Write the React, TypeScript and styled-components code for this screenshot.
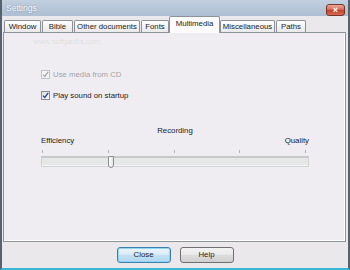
import { ReactElement } from 'react';
import styled, { createGlobalStyle, css } from 'styled-components';

//
// Styles
//

const GlobalStyle = createGlobalStyle`
  html, body {
    margin: 0;
    padding: 0;
    background: #ebe8ec;
  }
`;

const WindowFrame = styled.div`
  box-sizing: border-box;
  width: 350px;
  height: 270px;
  display: flex;
  flex-direction: column;
  background: #ebe8ec;
  border-left: 2px solid #56626e;
  border-right: 2px solid #56626e;
  border-bottom: 2px solid #38b6d6;
  font-family: "Liberation Sans", Arial, sans-serif;
  font-size: 7.8px;
  color: #1c1c1c;
`;

const TitleBar = styled.div`
  height: 16px;
  flex: none;
  display: flex;
  align-items: center;
  padding: 0 3px 0 4px;
  background: linear-gradient(#c2d0e0, #aebfd3);
`;

const Title = styled.span`
  font-size: 8.5px;
  color: #f7f9fc;
  text-shadow: 0 0 2px rgba(70, 90, 120, 0.6);
`;

const CloseBox = styled.div`
  margin-left: auto;
  box-sizing: border-box;
  width: 19px;
  height: 12px;
  margin-top: 4px;
  border: 1px solid #7a3426;
  border-radius: 3px;
  background: linear-gradient(#e8ab9c, #d3644e 50%, #c2402a 51%, #d66a4f);
  color: #fff;
  font-size: 9px;
  font-weight: 700;
  line-height: 10px;
  text-align: center;
`;

const TabStrip = styled.div`
  height: 16px;
  flex: none;
  display: flex;
  align-items: flex-end;
  padding-left: 2px;
`;

const Tab = styled.div<{ $width: number; $active?: boolean }>`
  box-sizing: border-box;
  width: ${({ $width }) => $width}px;
  height: 12px;
  line-height: 11px;
  text-align: center;
  white-space: nowrap;
  border: 1px solid #8e9296;
  border-bottom: none;
  border-radius: 2px 2px 0 0;
  background: linear-gradient(#fdfdfd, #e9e9ea);
  margin-right: 1px;

  ${({ $active }) => $active && css`
    position: relative;
    z-index: 1;
    height: 17px;
    line-height: 14px;
    margin: 0 0 -1px -1px;
    background: #fbfbfc;
  `}
`;

const Panel = styled.div`
  box-sizing: border-box;
  height: 210px;
  margin: 0 2px 0 1px;
  padding: 4px 36px 0 37px;
  display: flex;
  flex-direction: column;
  background: #efedf1;
  border: 1px solid #8e9399;
  box-shadow: inset -1px -1px 0 #ffffff;
`;

const Watermark = styled.div`
  height: 10px;
  line-height: 10px;
  margin-left: -8px;
  color: #dad9de;
  text-shadow: 0 0 1px #ffffff;
`;

const CheckRow = styled.label<{ $disabled?: boolean }>`
  display: flex;
  align-items: center;
  gap: 3px;
  height: 12px;
  margin-top: ${({ $disabled }) => ($disabled ? 21 : 9)}px;
  color: ${({ $disabled }) => ($disabled ? '#a4a4a8' : '#1c1c1c')};
`;

const Box = styled.span<{ $disabled?: boolean }>`
  box-sizing: border-box;
  width: 9px;
  height: 9px;
  display: flex;
  align-items: center;
  justify-content: center;
  border: 1px solid ${({ $disabled }) => ($disabled ? '#c2c2c6' : '#8c8f95')};
  background: ${({ $disabled }) => ($disabled ? '#f4f4f4' : 'linear-gradient(135deg, #dcdde2, #fbfbfc)')};
`;

const SliderCaption = styled.div`
  margin-top: 25px;
  height: 10px;
  line-height: 10px;
  text-align: center;
`;

const SliderEnds = styled.div`
  display: flex;
  justify-content: space-between;
  height: 10px;
  line-height: 10px;
`;

const Ticks = styled.div`
  display: flex;
  justify-content: space-between;
  height: 3px;
  margin-top: 4px;
  padding: 0 3px 0 1px;
`;

const Tick = styled.span`
  width: 1px;
  height: 3px;
  background: #b4b4b8;
`;

const Track = styled.div`
  position: relative;
  box-sizing: border-box;
  height: 11px;
  margin-top: 3px;
  background: #e6e8e8;
  border: 1px solid #d2d3d5;
  border-top: 2px solid #c7c8cb;
  box-shadow: inset 0 -1px 0 #f6f6f6;
`;

const Thumb = styled.div`
  position: absolute;
  top: -2px;
  box-sizing: border-box;
  width: 6px;
  height: 12px;
  border: 1px solid #8a8c90;
  border-radius: 1px 1px 3px 3px;
  background: linear-gradient(90deg, #ffffff, #e4e4e6);
`;

const Footer = styled.div`
  flex: 1;
  display: flex;
  align-items: flex-start;
  justify-content: center;
  gap: 9px;
  padding-top: 5px;
`;

const Button = styled.div<{ $default?: boolean }>`
  box-sizing: border-box;
  width: 54px;
  height: 16px;
  line-height: 14px;
  text-align: center;
  border: 1px solid #707070;
  border-radius: 3px;
  background: linear-gradient(#f2f2f2, #ebebeb 45%, #dddddd 50%, #cfcfcf);

  ${({ $default }) => $default && css`
    border-color: #3c7fb1;
    box-shadow: inset 0 0 0 1px #8ed6f4;
    background: linear-gradient(#edf6fb, #dcecf7 45%, #c3e1f3 50%, #b2d6ed);
  `}
`;

//
// Component
//

const tabs = [
  { label: 'Window', width: 37 },
  { label: 'Bible', width: 31 },
  { label: 'Other documents', width: 66 },
  { label: 'Fonts', width: 28 },
  { label: 'Multimedia', width: 51, active: true },
  { label: 'Miscellaneous', width: 55 },
  { label: 'Paths', width: 30 },
];

const Check = ({ disabled }: { disabled?: boolean }): ReactElement => (
  <Box $disabled={disabled}>
    <svg width="7" height="7" viewBox="0 0 7 7">
      <path
        d="M1 3.6 L2.8 5.5 L6.2 0.8"
        fill="none"
        stroke={disabled ? '#a8a8ac' : '#21449a'}
        strokeWidth="1.3"
      />
    </svg>
  </Box>
);

const App = (): ReactElement => {
  const thumbPos = 66;

  return (
    <>
      <GlobalStyle />
      <WindowFrame>
        <TitleBar>
          <Title>Settings</Title>
          <CloseBox>×</CloseBox>
        </TitleBar>
        <TabStrip>
          {tabs.map(({ label, width, active }) => (
            <Tab key={label} $width={width} $active={active}>{label}</Tab>
          ))}
        </TabStrip>
        <Panel>
          <Watermark>www.softpedia.com</Watermark>
          <CheckRow $disabled>
            <Check disabled />
            Use media from CD
          </CheckRow>
          <CheckRow>
            <Check />
            Play sound on startup
          </CheckRow>
          <SliderCaption>Recording</SliderCaption>
          <SliderEnds>
            <span>Efficiency</span>
            <span>Quality</span>
          </SliderEnds>
          <Ticks>
            <Tick />
            <Tick />
            <Tick />
            <Tick />
            <Tick />
          </Ticks>
          <Track>
            <Thumb style={{ left: thumbPos }} />
          </Track>
        </Panel>
        <Footer>
          <Button $default>Close</Button>
          <Button>Help</Button>
        </Footer>
      </WindowFrame>
    </>
  );
};

export default App;
